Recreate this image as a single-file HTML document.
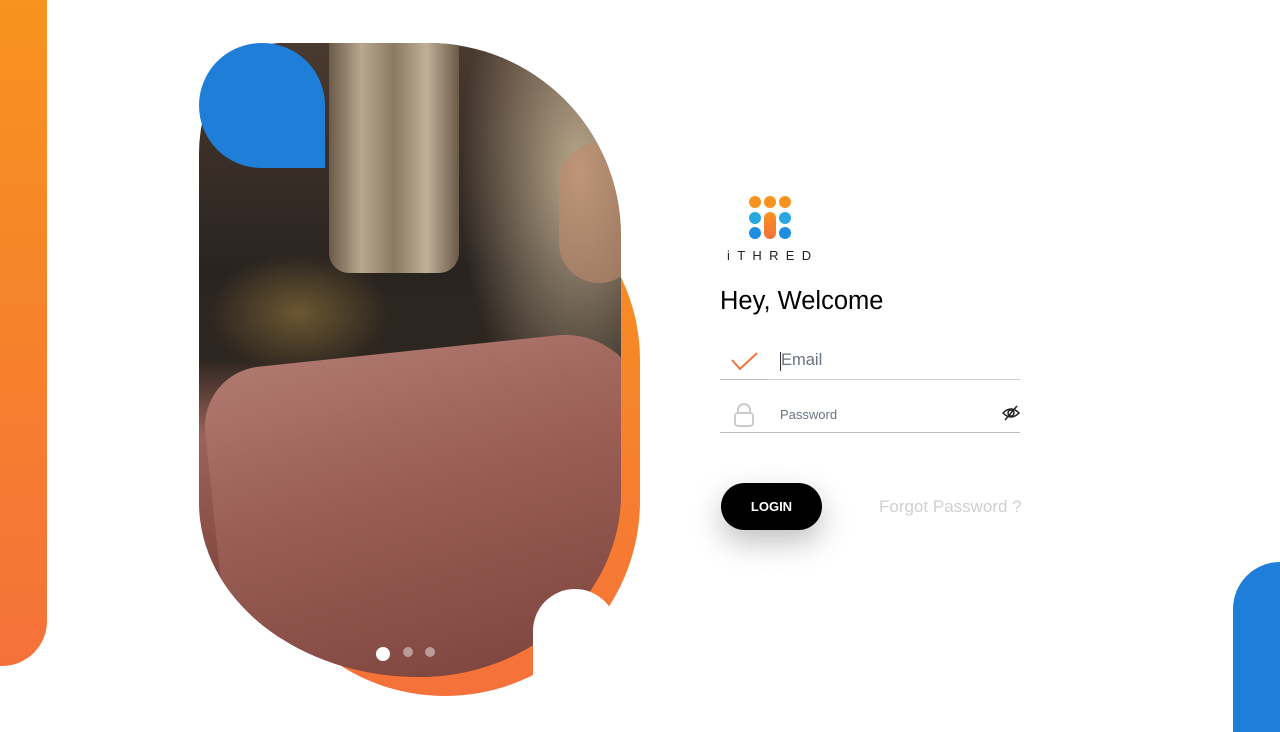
<!DOCTYPE html>
<html><head><meta charset="utf-8"><style>
*{margin:0;padding:0;box-sizing:border-box}
body{width:1280px;height:720px;background:#fff;position:relative;overflow:hidden;font-family:"Liberation Sans",sans-serif}
.abs{position:absolute}
</style></head><body>
<div class="abs" style="left:0;top:0;width:47px;height:666px;border-radius:0 0 45px 0;background:linear-gradient(#f7931e,#f5713a)"></div>
<div class="abs" style="left:1233px;top:562px;width:47px;height:170px;border-radius:47px 0 0 0;background:#1f7fd8"></div>

<div class="abs" style="left:250px;top:170px;width:390px;height:526px;border-radius:170px 195px 200px 200px / 200px 195px 200px 200px;background:linear-gradient(#f7931e,#f5713a)"></div>
<div class="abs" style="left:199px;top:43px;width:422px;height:634px;border-radius:90px 210px 220px 240px / 120px 210px 200px 190px;overflow:hidden;
background:
radial-gradient(ellipse 120px 260px at 380px 130px,rgba(200,180,150,.9),transparent),
radial-gradient(ellipse 90px 60px at 100px 270px,rgba(150,120,60,.6),transparent),
linear-gradient(180deg,#4a3a30 0%,#2a2420 35%,#2e2620 50%,#9a6258 62%,#8a5048 78%,#6a3630 100%)">
<div class="abs" style="left:130px;top:0;width:130px;height:230px;background:linear-gradient(90deg,#6a5a48,#b8a890,#8a7a62,#c0b098,#6a5a48);border-radius:0 0 20px 20px"></div>
<div class="abs" style="left:0;top:330px;width:440px;height:340px;background:linear-gradient(170deg,#b07a70,#9a5e55 40%,#7a423c);border-radius:60px 80px 0 0;transform:rotate(-6deg);transform-origin:left top"></div>
<div class="abs" style="left:360px;top:100px;width:80px;height:140px;background:#c08a6a;border-radius:40px;opacity:.6"></div>
</div>
<div class="abs" style="left:199px;top:43px;width:126px;height:125px;background:#1f7fd8;border-radius:63px 63px 0 63px"></div>
<div class="abs" style="left:533px;top:589px;width:84px;height:100px;background:#fff;border-radius:42px 42px 0 0"></div>
<div class="abs" style="left:376px;top:647px;width:14px;height:14px;border-radius:50%;background:#fff"></div>
<div class="abs" style="left:403px;top:647px;width:10px;height:10px;border-radius:50%;background:rgba(255,255,255,.45)"></div>
<div class="abs" style="left:425px;top:647px;width:10px;height:10px;border-radius:50%;background:rgba(255,255,255,.45)"></div>

<div class="abs" style="left:749px;top:196px;width:12px;height:12px;border-radius:50%;background:#f7931e"></div>
<div class="abs" style="left:764px;top:196px;width:12px;height:12px;border-radius:50%;background:#f7931e"></div>
<div class="abs" style="left:779px;top:196px;width:12px;height:12px;border-radius:50%;background:#f7931e"></div>
<div class="abs" style="left:749px;top:212px;width:12px;height:12px;border-radius:50%;background:#29a8e0"></div>
<div class="abs" style="left:779px;top:212px;width:12px;height:12px;border-radius:50%;background:#29a8e0"></div>
<div class="abs" style="left:749px;top:227px;width:12px;height:12px;border-radius:50%;background:#1f8ee0"></div>
<div class="abs" style="left:779px;top:227px;width:12px;height:12px;border-radius:50%;background:#1f8ee0"></div>
<div class="abs" style="left:764px;top:212px;width:12px;height:27px;border-radius:6px;background:linear-gradient(#f7931e,#f5713a)"></div>
<div class="abs" style="left:727px;top:248px;font-size:13px;letter-spacing:7.3px;color:#222">iTHRED</div>

<div class="abs" style="left:720px;top:287px;font-size:25.5px;color:#000">Hey, Welcome</div>

<svg class="abs" style="left:730px;top:350px" width="30" height="22"><path d="M2 10 L10 19 L27 3" fill="none" stroke="#f5713a" stroke-width="2"/></svg>
<div class="abs" style="left:780px;top:352px;width:1px;height:19px;background:#333"></div>
<div class="abs" style="left:781px;top:351px;font-size:16.5px;color:#6b7280">Email</div>
<div class="abs" style="left:720px;top:379px;width:300px;height:1px;background:#ccc"></div>
<div class="abs" style="left:720px;top:379px;width:49px;height:1px;background:#bbb"></div>

<svg class="abs" style="left:732px;top:402px" width="24" height="26"><path d="M6 11 V8 a6 6 0 0 1 12 0 V11" fill="none" stroke="#ccc" stroke-width="2"/><rect x="3" y="11" width="18" height="13" rx="3" fill="none" stroke="#ccc" stroke-width="2"/></svg>
<div class="abs" style="left:780px;top:407px;font-size:13px;color:#6b7280">Password</div>
<svg class="abs" style="left:1002px;top:405px" width="18" height="17"><path d="M1 8 Q9 0 17 8 Q9 16 1 8Z" fill="none" stroke="#222" stroke-width="1.5"/><circle cx="9" cy="8" r="3" fill="none" stroke="#222" stroke-width="1.5"/><path d="M3 15 L15 1" stroke="#222" stroke-width="1.5"/></svg>
<div class="abs" style="left:720px;top:432px;width:300px;height:1px;background:#bbb"></div>

<div class="abs" style="left:721px;top:483px;width:101px;height:47px;border-radius:24px;background:#000;box-shadow:0 12px 30px rgba(0,0,0,.25);color:#fff;font-weight:bold;font-size:13px;text-align:center;line-height:47px">LOGIN</div>
<div class="abs" style="left:879px;top:497px;font-size:17px;color:#d0d0d0">Forgot Password ?</div>
</body></html>
